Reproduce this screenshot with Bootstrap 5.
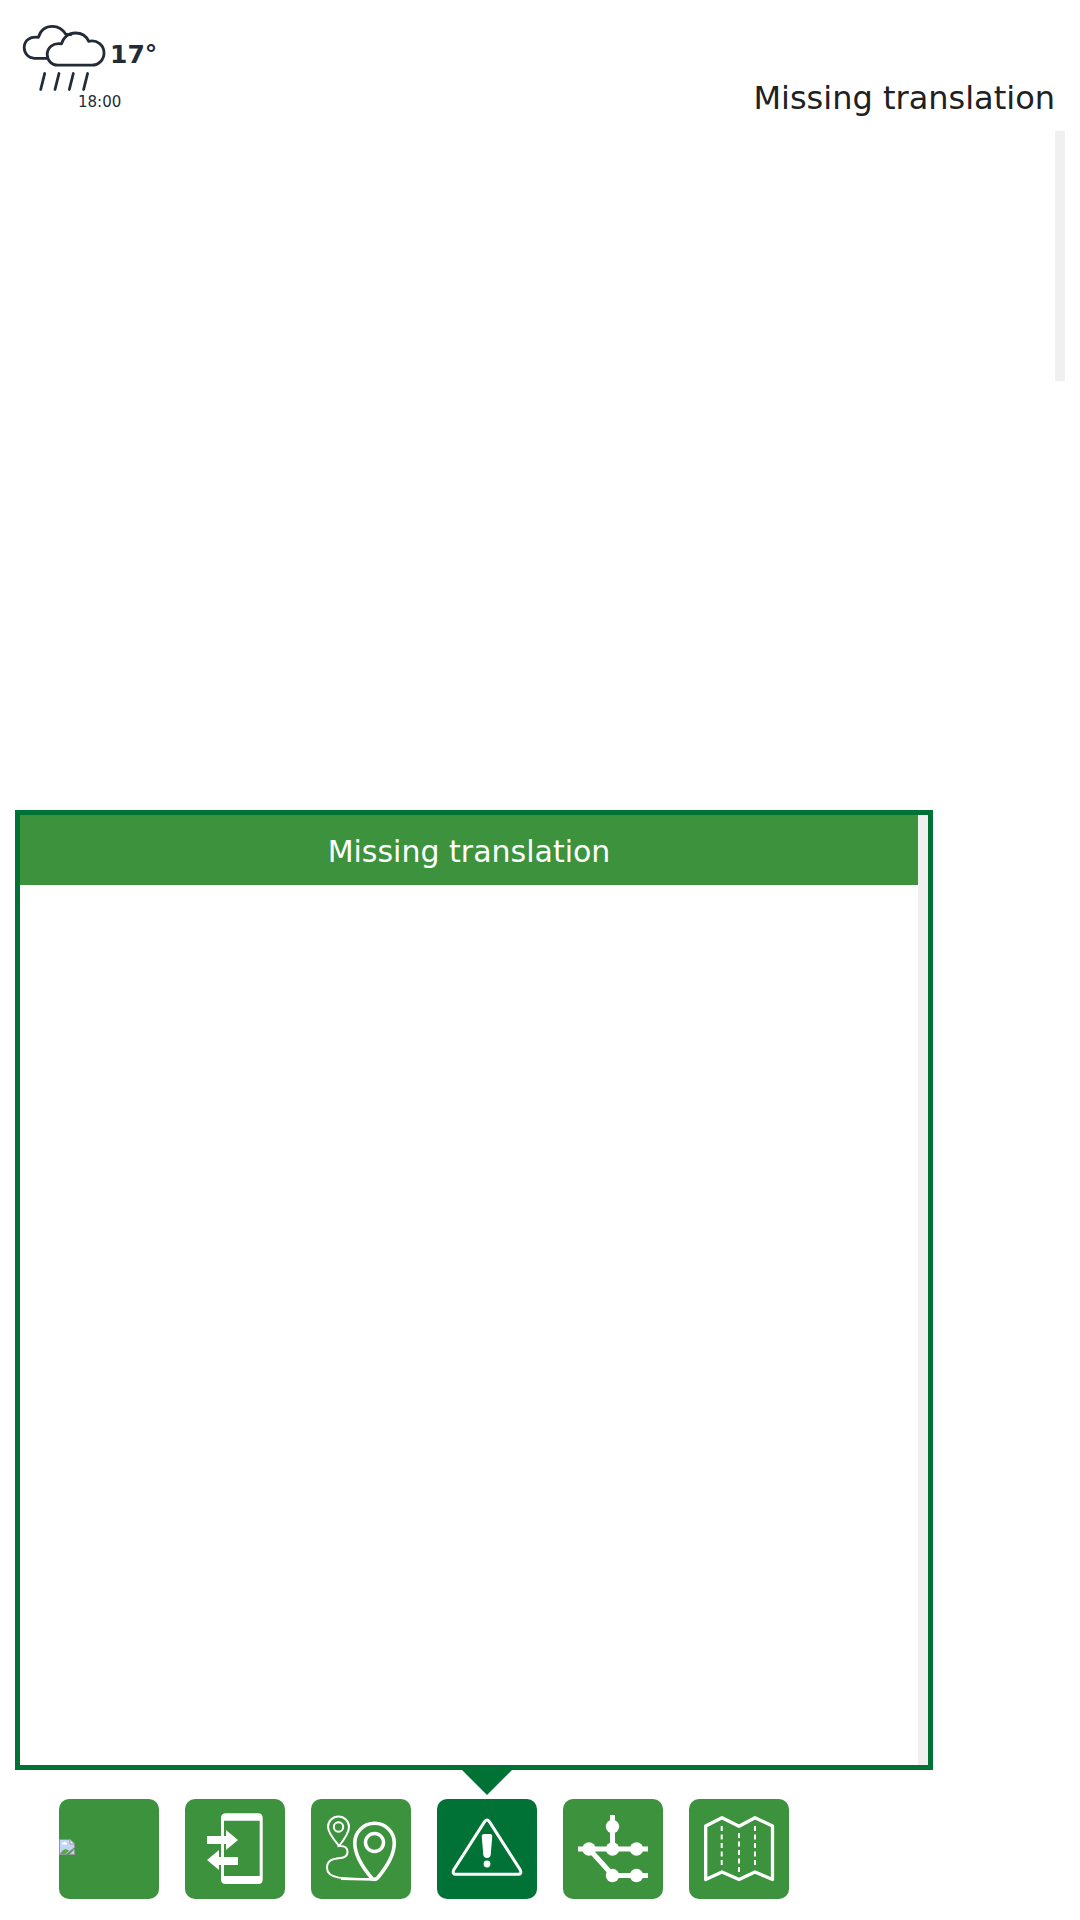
<!DOCTYPE html>
<html lang="en">
<head>
<meta charset="utf-8">
<meta name="viewport" content="width=device-width, initial-scale=1">
<title>Missing translation</title>
<link href="https://cdn.jsdelivr.net/npm/bootstrap@5.3.0/dist/css/bootstrap.min.css" rel="stylesheet">
<style>
  body { font-family: "DejaVu Sans", Verdana, sans-serif; color: #212121; background: #fff; }
  .top-bar { padding: 20px 15px 0 20px; height: 131px; }
  .weather { color: #222b36; }
  .weather-icon { width: 90px; height: 75px; }
  .weather-temp { font-size: 25px; line-height: 28px; padding-top: 21px; }
  .weather-time { font-size: 15px; line-height: 20px; margin: -3px 0 0 58px; }
  .page-title { font-size: 32px; line-height: 40px; padding-top: 58px; margin: 0 10px 0 0; font-weight: 400; }
  .departures { height: 250px; margin-right: 15px; }
  .scroll-track { width: 10px; background: #f0f0f0; }
  .info-panel { width: 85%; height: 50vh; margin-left: 15px; border: 5px solid #007236; background: #fff; }
  .info-heading { font-size: 30px; line-height: 38px; padding: 18px 0 14px; font-weight: 400; background: #3d923e; color: #fff; }
  .menu-bar { height: 150px; padding: 29px 0 0 59px; gap: 26px; }
  .tile { width: 100px; height: 100px; border: 0; border-radius: 10px; background: #3d923e; color: #fff; }
  .tile.current { background: #007236; }
  .tile svg { width: 100px; height: 100px; display: block; }
  .tile.current::before { content: ""; position: absolute; left: 25px; top: -29px; border: 25px solid transparent; border-top-color: #007236; border-bottom: 0; }
</style>
<script defer src="https://cdn.jsdelivr.net/npm/bootstrap@5.3.0/dist/js/bootstrap.bundle.min.js"></script>
</head>
<body class="d-flex flex-column min-vh-100">
<header class="top-bar d-flex justify-content-between align-items-start">
  <div class="weather">
    <div class="d-flex align-items-start">
      <svg class="weather-icon" viewBox="20 20 90 75" fill="none" stroke="currentColor" stroke-width="2.8" stroke-linecap="round" stroke-linejoin="round" aria-hidden="true">
        <path d="M47 58.300H34.500C28.500 58.300 24.200 53.500 24.200 47.500C24.200 40.500 30 36 38.400 37.300C40.500 30 46 26.300 52.500 26.300C58.500 26.300 63 29.500 66 34.500H71"/>
        <path d="M57.500 65.200C51.500 65.200 47.200 60.300 47.200 54.500C47.200 47.500 53 42.500 61.500 43.900C63.500 37 69 33 75.500 33C81.500 33 86.500 36.500 88.700 41.300C97.500 39.500 104 45.500 104 53C104 60 98.500 65.200 92 65.200Z"/>
        <path d="M44.700 73.500L40.700 89.500M59 73.500L55 89.500M73.300 73.500L69.300 89.500M87.600 73.500L83.600 89.500"/>
      </svg>
      <div class="weather-temp fw-bold">17°</div>
    </div>
    <div class="weather-time">18:00</div>
  </div>
  <h1 class="page-title">Missing translation</h1>
</header>
<section class="departures d-flex justify-content-end" aria-label="Departures"><div class="scroll-track"></div></section>
<main class="info-panel d-flex mt-auto">
  <div class="flex-grow-1"><h2 class="info-heading text-center m-0">Missing translation</h2></div>
  <div class="scroll-track"></div>
</main>
<nav class="menu-bar d-flex align-items-start" aria-label="Menu">
  <button class="tile p-0" type="button" aria-label="Home">
    <svg viewBox="0 0 100 100"><path d="M.5 40.500H11L15.500 45V48.500L7 55.500H.5Z" fill="#c3d5f5" stroke="#92969c"/><path d="M11 40.500V45H15.500Z" fill="#fff" stroke="#92969c"/><path d="M2.500 45.500Q2.500 43.500 4.500 43.500Q5.500 41.500 7 43.500Q8.500 44 8 45.500Z" fill="#fff"/><path d="M1 55Q4.500 49 8 50.500L10 51.500L6.500 55Z" fill="#57ac38"/><path d="M15.500 50V55.500H10Z" fill="#c3d5f5" stroke="#92969c"/></svg>
  </button>
  <button class="tile p-0" type="button" aria-label="Send to phone">
    <svg viewBox="0 0 100 100" fill="currentColor"><path fill-rule="evenodd" d="M41 14.300H73Q77.700 14.300 77.700 19V80.500Q77.700 85 73 85H41Q36 85 36 80.500V19Q36 14.300 41 14.300ZM39 21.700V77H74.700V21.700Z"/><path d="M22 37H41V31L53 41L41 51V45H22ZM53 58H34V51L22 61L34 71V66H53Z"/></svg>
  </button>
  <button class="tile p-0" type="button" aria-label="Route planner">
    <svg viewBox="0 0 100 100" fill="none" stroke="currentColor"><path d="M28 47C24 42 17 34 17 28A10.500 10.500 0 0 1 38 28C38 34 32 42 28 47C34 46.500 36.500 49 36.500 53C36.500 64 16 54 16 69C16 80 32 80 62 80" stroke-width="2"/><circle cx="27.500" cy="28" r="4.700" stroke-width="2"/><path d="M61.500 80C52 69 43.800 56 43.800 44A19.700 19.700 0 0 1 83.300 44C83.300 56 75 69 66.500 79Q64.500 81 61.500 80Z" stroke-width="3.600"/><circle cx="63.500" cy="43.500" r="9" stroke-width="3.500"/><path d="M30 79.700L62 80.500" stroke-width="2.500"/></svg>
  </button>
  <button class="tile current p-0 position-relative" type="button" aria-label="Disruptions" aria-current="page">
    <svg viewBox="0 0 100 100"><path d="M47.600 22.700Q50 19.500 52.400 22.700L83.300 71Q85 75.300 81 75.300H19Q15 75.300 16.700 71Z" fill="none" stroke="currentColor" stroke-width="3"/><path d="M47 35H53Q55.500 35 55.200 38L53.700 56Q53 59 50 59Q47 59 46.300 56L44.800 38Q44.500 35 47 35Z" fill="currentColor"/><circle cx="50" cy="65" r="3.400" fill="currentColor"/></svg>
  </button>
  <button class="tile p-0" type="button" aria-label="Network">
    <svg viewBox="0 0 100 100" fill="currentColor"><path d="M49.500 16V50M15 50H85M26 50L50 76.500H85" fill="none" stroke="currentColor" stroke-width="5"/><circle cx="49.500" cy="27.500" r="6.700"/><circle cx="26" cy="50" r="6.700"/><circle cx="49.500" cy="50" r="6.700"/><circle cx="73.500" cy="50" r="6.700"/><circle cx="49.500" cy="76.500" r="6.700"/><circle cx="73.500" cy="76.500" r="6.700"/></svg>
  </button>
  <button class="tile p-0" type="button" aria-label="Map">
    <svg viewBox="0 0 100 100" fill="none" stroke="currentColor"><path d="M16.700 27L33 18.700L50 27.300L66 18.700L83.500 27V80.500L66 73L50 80.500L33 73L16.700 80.500Z" stroke-width="3.300" stroke-linejoin="round"/><path d="M32.700 27V66M50 34V73M66 27V66" stroke-width="2" stroke-dasharray="5 3.500"/></svg>
  </button>
</nav>
</body>
</html>
